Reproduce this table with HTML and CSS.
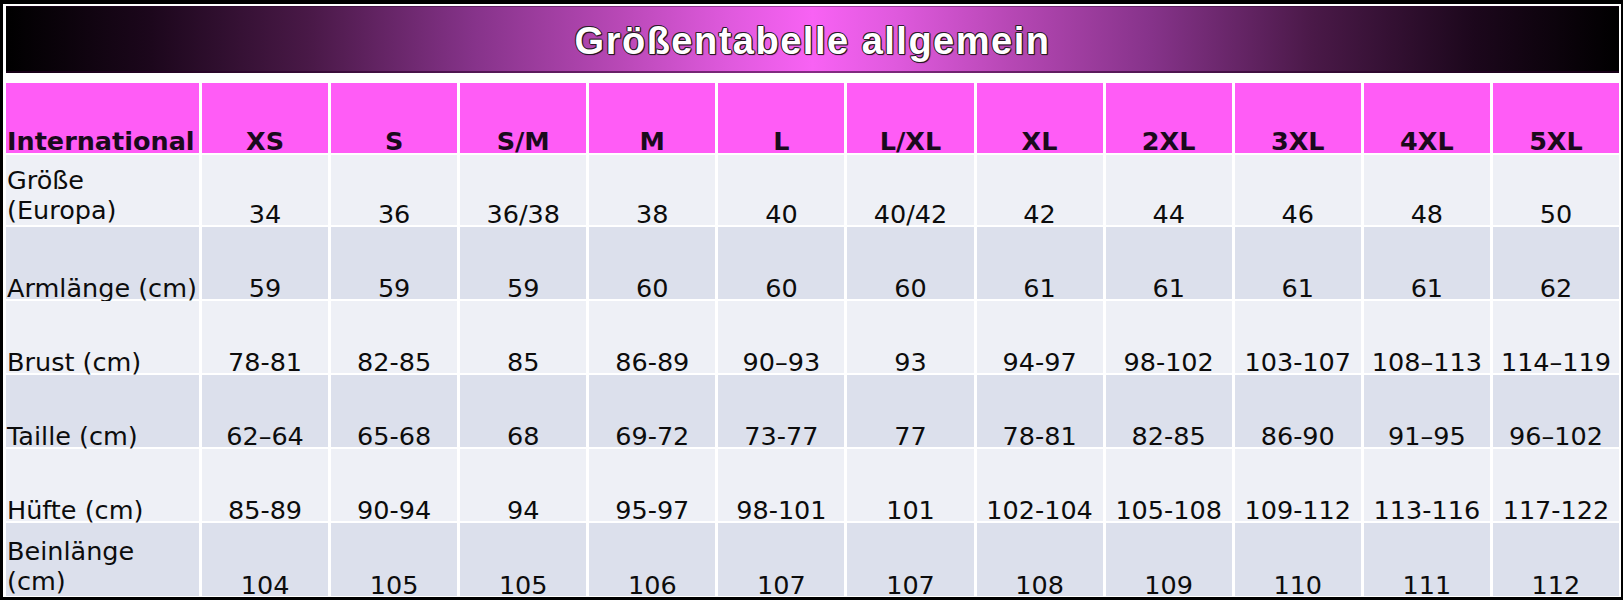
FILE: index.html
```html
<!DOCTYPE html>
<html lang="de">
<head>
<meta charset="utf-8">
<title>Größentabelle allgemein</title>
<link rel="stylesheet" href="styles.css">
</head>
<body>
<div class="sheet">
  <div class="title"><span class="title-text">Größentabelle allgemein</span></div>
  <div class="grid">
    <div class="cell head label">International</div>
    <div class="cell head">XS</div>
    <div class="cell head">S</div>
    <div class="cell head">S/M</div>
    <div class="cell head">M</div>
    <div class="cell head">L</div>
    <div class="cell head">L/XL</div>
    <div class="cell head">XL</div>
    <div class="cell head">2XL</div>
    <div class="cell head">3XL</div>
    <div class="cell head">4XL</div>
    <div class="cell head">5XL</div>

    <div class="cell light label two">Größe<br>(Europa)</div>
    <div class="cell light">34</div>
    <div class="cell light">36</div>
    <div class="cell light">36/38</div>
    <div class="cell light">38</div>
    <div class="cell light">40</div>
    <div class="cell light">40/42</div>
    <div class="cell light">42</div>
    <div class="cell light">44</div>
    <div class="cell light">46</div>
    <div class="cell light">48</div>
    <div class="cell light">50</div>

    <div class="cell dark label">Armlänge (cm)</div>
    <div class="cell dark">59</div>
    <div class="cell dark">59</div>
    <div class="cell dark">59</div>
    <div class="cell dark">60</div>
    <div class="cell dark">60</div>
    <div class="cell dark">60</div>
    <div class="cell dark">61</div>
    <div class="cell dark">61</div>
    <div class="cell dark">61</div>
    <div class="cell dark">61</div>
    <div class="cell dark">62</div>

    <div class="cell light label">Brust (cm)</div>
    <div class="cell light">78-81</div>
    <div class="cell light">82-85</div>
    <div class="cell light">85</div>
    <div class="cell light">86-89</div>
    <div class="cell light">90–93</div>
    <div class="cell light">93</div>
    <div class="cell light">94-97</div>
    <div class="cell light">98-102</div>
    <div class="cell light">103-107</div>
    <div class="cell light">108–113</div>
    <div class="cell light">114–119</div>

    <div class="cell dark label">Taille (cm)</div>
    <div class="cell dark">62–64</div>
    <div class="cell dark">65-68</div>
    <div class="cell dark">68</div>
    <div class="cell dark">69-72</div>
    <div class="cell dark">73-77</div>
    <div class="cell dark">77</div>
    <div class="cell dark">78-81</div>
    <div class="cell dark">82-85</div>
    <div class="cell dark">86-90</div>
    <div class="cell dark">91–95</div>
    <div class="cell dark">96–102</div>

    <div class="cell light label">Hüfte (cm)</div>
    <div class="cell light">85-89</div>
    <div class="cell light">90-94</div>
    <div class="cell light">94</div>
    <div class="cell light">95-97</div>
    <div class="cell light">98-101</div>
    <div class="cell light">101</div>
    <div class="cell light">102-104</div>
    <div class="cell light">105-108</div>
    <div class="cell light">109-112</div>
    <div class="cell light">113-116</div>
    <div class="cell light">117-122</div>

    <div class="cell dark label two">Beinlänge<br>(cm)</div>
    <div class="cell dark">104</div>
    <div class="cell dark">105</div>
    <div class="cell dark">105</div>
    <div class="cell dark">106</div>
    <div class="cell dark">107</div>
    <div class="cell dark">107</div>
    <div class="cell dark">108</div>
    <div class="cell dark">109</div>
    <div class="cell dark">110</div>
    <div class="cell dark">111</div>
    <div class="cell dark">112</div>
  </div>
</div>
</body>
</html>
```

FILE: styles.css
```css
html, body {
  margin: 0;
  padding: 0;
  background: #000;
}

body {
  width: 1623px;
  height: 600px;
  overflow: hidden;
}

.sheet {
  margin: 4px 0 0 3px;
  width: 1613px;
  padding: 2px 2px 1px 3px;
  background: #fff;
}

.title {
  height: 67px;
  margin-bottom: 10px;
  display: flex;
  align-items: center;
  justify-content: center;
  background: linear-gradient(to right,
    #000 0%,
    #1c071c 9%,
    #4a1948 19%,
    #86338a 29%,
    #b848b6 38%,
    #e05ade 45%,
    #f862f4 50%,
    #e05ade 55%,
    #b848b6 62%,
    #86338a 71%,
    #4a1948 81%,
    #1c071c 91%,
    #000 100%);
  box-shadow: inset 0 -2px 0 rgba(40, 0, 40, 0.55), inset 0 1px 0 rgba(40, 0, 40, 0.4);
}

.title-text {
  font-family: "Liberation Sans", Arial, sans-serif;
  font-weight: bold;
  font-size: 38px;
  letter-spacing: 1.5px;
  color: #fff;
  line-height: 1;
  margin-top: 3px;
  text-shadow:
    -1px 0 0 #2a1a2a,
    1px 0 0 #2a1a2a,
    0 -1px 0 #2a1a2a,
    0 1px 0 #2a1a2a,
    -1px -1px 0 #3a2a3a,
    1px 1px 1px #000;
}

.grid {
  display: grid;
  grid-template-columns: 193px repeat(11, 1fr);
  grid-template-rows: 70px 70px 72px 72px 72px 72px 73px;
  column-gap: 3px;
  row-gap: 2px;
}

.cell {
  display: flex;
  align-items: flex-end;
  justify-content: center;
  text-align: center;
  font-family: "DejaVu Sans", Verdana, sans-serif;
  font-size: 25.5px;
  line-height: 22px;
  color: #0c0c0c;
  white-space: nowrap;
}

.cell.label {
  justify-content: flex-start;
  text-align: left;
  padding-left: 1px;
}

.cell.two {
  line-height: 30px;
}

.head {
  background: #ff5cf6;
  font-weight: bold;
  color: #1a0a1c;
  padding-bottom: 1px;
}

.light {
  background: #eef0f6;
}

.dark {
  background: #dce0ec;
}
```
